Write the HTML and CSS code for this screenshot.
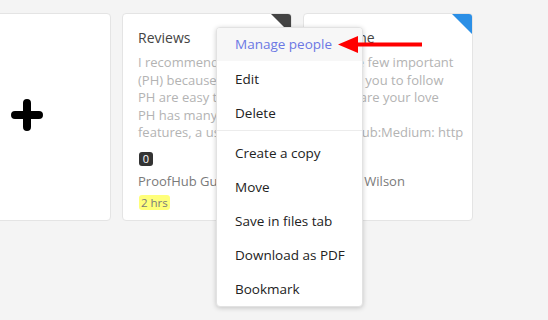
FILE: index.html
```html
<!DOCTYPE html>
<html>
<head>
<meta charset="utf-8">
<link rel="stylesheet" href="styles.css">
</head>
<body>
<div class="board">
  <div class="cards">
    <div class="card card-add">
      <svg class="plus" width="32" height="32" viewBox="0 0 32 32"><path d="M16 4V28M4 16H28" stroke="#000" stroke-width="8" stroke-linecap="round"/></svg>
    </div>
    <div class="card">
      <span class="corner corner-dark"></span>
      <div class="title">Reviews</div>
      <div class="body">
        <div class="line">I recommend ProofHub</div>
        <div class="line">(PH) because the tools in</div>
        <div class="line">PH are easy to use and</div>
        <div class="line">PH has many amazing</div>
        <div class="line">features, a user friendly</div>
      </div>
      <div class="badge">0</div>
      <div class="name">ProofHub Guy</div>
      <div><span class="time">2 hrs</span></div>
    </div>
    <div class="card">
      <span class="corner corner-blue"></span>
      <div class="title">Timeline</div>
      <div class="body">
        <div class="line">Browse few important</div>
        <div class="line">tips for you to follow</div>
        <div class="line">and share your love</div>
        <div class="line">to us.</div>
        <div class="line">ProofHub:Medium: http</div>
      </div>
      <div class="badge">0</div>
      <div class="name">Jeremy Wilson</div>
      <div><span class="time">3 hrs</span></div>
    </div>
  </div>

  <div class="menu">
    <div class="group">
      <div class="item active">Manage people</div>
      <div class="item">Edit</div>
      <div class="item">Delete</div>
    </div>
    <div class="group group-2">
      <div class="item">Create a copy</div>
      <div class="item">Move</div>
      <div class="item">Save in files tab</div>
      <div class="item">Download as PDF</div>
      <div class="item">Bookmark</div>
    </div>
  </div>

  <svg class="arrow" width="90" height="22" viewBox="0 0 90 22">
    <path d="M20 8.5H86V12.5H20Z" fill="#f00"/>
    <path d="M2 10.5L22 2V19Z" fill="#f00"/>
  </svg>
</div>
</body>
</html>
```

FILE: styles.css
```css
* { box-sizing: border-box; }
html, body {
  margin: 0;
  padding: 0;
  background: #f4f4f4;
  font-family: "Open Sans", "Noto Sans", sans-serif;
}
.board {
  position: relative;
  width: 548px;
  height: 320px;
  overflow: hidden;
}
.cards {
  display: flex;
  gap: 11px;
  padding-top: 13px;
  margin-left: -59px;
}
.card {
  position: relative;
  flex: 0 0 170px;
  height: 208px;
  background: #fff;
  border: 1px solid #e4e4e4;
  border-radius: 4px;
  padding: 14px 15px 0 15px;
  overflow: hidden;
}
.card-add {
  display: flex;
  align-items: center;
  justify-content: center;
  padding: 0;
}
.plus { margin-top: -4px; margin-left: 2px; }
.corner {
  position: absolute;
  top: 0;
  right: 0;
  width: 0;
  height: 0;
  border-left: 20px solid transparent;
  border-top: 20px solid #444;
}
.corner-blue { border-top-color: #2b8fe6; }
.title {
  font-size: 14px;
  line-height: 20px;
  color: #444;
  white-space: nowrap;
}
.body {
  margin-top: 6px;
  font-size: 13px;
  line-height: 17.5px;
  color: #b3b3b3;
}
.line {
  white-space: nowrap;
}
.badge {
  display: inline-flex;
  align-items: center;
  justify-content: center;
  margin-top: 10.5px;
  margin-left: 1px;
  width: 14px;
  height: 14px;
  background: #333;
  color: #fff;
  border-radius: 3px;
  font-size: 11px;
  line-height: 14px;
  vertical-align: top;
}
.name {
  margin-top: 6px;
  font-size: 13px;
  line-height: 18px;
  color: #7a7a7a;
  white-space: nowrap;
}
.time {
  display: inline-block;
  margin-left: 1px;
  padding: 0 2px;
  font-size: 11.5px;
  line-height: 15px;
  color: #7a7a7a;
  background: #ffff7a;
  border-radius: 3px;
}
.menu {
  position: absolute;
  left: 216px;
  top: 27px;
  width: 147px;
  background: #fff;
  border-radius: 4px;
  border: 1px solid #e2e2e2;
  box-shadow: 0 1px 5px rgba(0, 0, 0, 0.2);
  overflow: hidden;
}
.group-2 {
  border-top: 1px solid #ececec;
  padding-top: 5px;
}
.item {
  height: 34px;
  line-height: 34px;
  padding-left: 18px;
  font-size: 13.5px;
  color: #222;
  white-space: nowrap;
}
.item.active {
  color: #6b78e4;
  background: #f7f7f7;
  height: 33px;
  line-height: 33px;
}
.item.active + .item { margin-top: 1px; }
.arrow {
  position: absolute;
  left: 336px;
  top: 34px;
}
```
